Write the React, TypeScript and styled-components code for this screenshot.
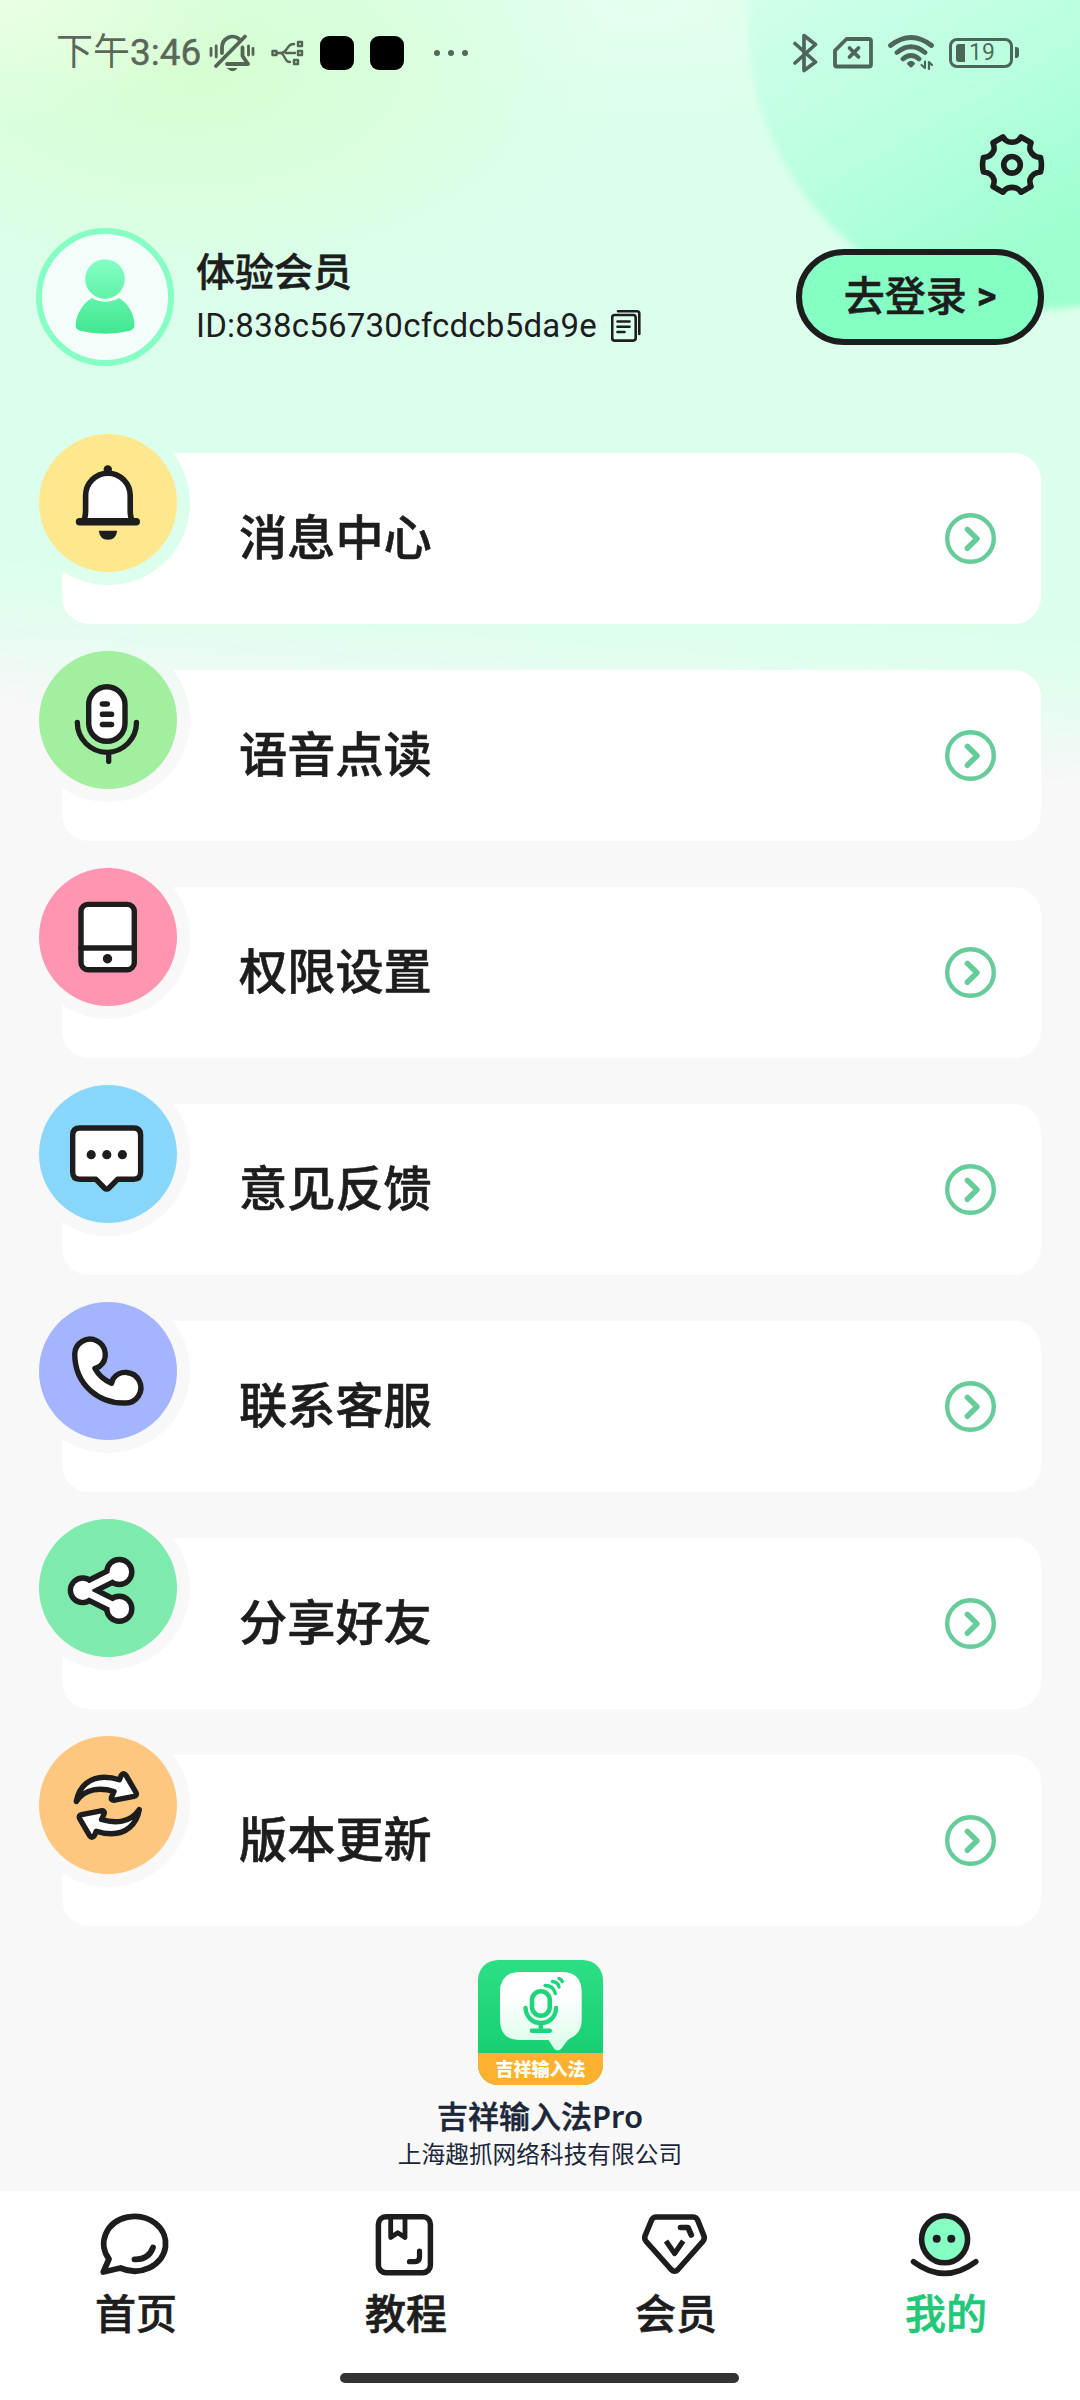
import React from 'react';
import styled, { createGlobalStyle } from 'styled-components';

const INK = '#1d1d1d';
const MINT = '#85ffc4';
const STATUS = 'rgba(0, 0, 0, 0.6)';

const GlobalStyle = createGlobalStyle`
  * { box-sizing: border-box; }
  body {
    margin: 0;
    background: #f8f8f8;
    font-family: Roboto, "Noto Sans CJK SC", sans-serif;
    color: ${INK};
  }
  svg { display: block; flex: none; }
`;

const Page = styled.div`
  position: relative;
  width: 1080px;
  height: 2400px;
  overflow: hidden;
  display: flex;
  flex-direction: column;
  background: #f8f8f8;
`;

const Backdrop = styled.div`
  position: absolute;
  inset: 0 0 auto 0;
  height: 860px;
  overflow: hidden;
  background:
    radial-gradient(ellipse 260px 130px at 0px 0px, rgba(236, 255, 228, 0.9), rgba(236, 255, 226, 0) 100%),
    radial-gradient(ellipse 420px 230px at 190px 70px, rgba(213, 254, 207, 0.95), rgba(214, 255, 212, 0.6) 50%, rgba(219, 255, 236, 0) 100%),
    radial-gradient(ellipse 300px 130px at 640px 0px, rgba(232, 255, 240, 0.8), rgba(232, 255, 240, 0) 100%),
    #dbffec;
  mask-image: linear-gradient(184.3deg, #000 630px, rgba(0, 0, 0, 0.85) 675px, rgba(0, 0, 0, 0.5) 722px, transparent 785px);
`;

const Blob = styled.div`
  position: absolute;
  left: 748px;
  top: -262px;
  width: 572px;
  height: 572px;
  border-radius: 50%;
  background: linear-gradient(150deg, #d0ffea 30%, #bdffe1 50%, #a8ffd6 66%, #9effce 76%);
  filter: blur(3px);
`;

const StatusBar = styled.div`
  position: relative;
  height: 104px;
  padding: 0 61px 0 56px;
  display: flex;
  justify-content: space-between;
  color: ${STATUS};
`;

const StatusGroup = styled.div`
  display: flex;
  align-items: center;
  height: 105px;
`;

const Clock = styled.span`
  width: 153px;
  padding-top: 1px;
  font-size: 37px;
  line-height: 44px;
  white-space: nowrap;
`;

const ClockTime = styled.span`
  -webkit-text-stroke: 0.5px #586858;
`;

const AppSquare = styled.i`
  width: 34px;
  height: 34px;
  margin-left: 16px;
  border-radius: 9px;
  background: #000;
`;

const Dots = styled.span`
  display: flex;
  gap: 8px;
  margin-left: 30px;
`;

const Dot = styled.i`
  width: 6px;
  height: 6px;
  border-radius: 50%;
  background: ${STATUS};
`;

const Battery = styled.span`
  display: flex;
  align-items: center;
  width: 64px;
  height: 30px;
  margin-left: 14px;
  padding-left: 4px;
  border: 3px solid rgba(0, 0, 0, 0.6);
  border-radius: 8px;
  font-size: 23px;
  line-height: 24px;
`;

const BatteryLevel = styled.i`
  width: 9px;
  height: 18px;
  margin-right: 4px;
  border-radius: 3px 0 0 3px;
  background: ${STATUS};
`;

const BatteryNub = styled.i`
  width: 4px;
  height: 11px;
  margin-left: 2px;
  border-radius: 0 3px 3px 0;
  background: ${STATUS};
`;

const Toolbar = styled.div`
  position: relative;
  display: flex;
  justify-content: flex-end;
  height: 124px;
  padding: 28px 34px 0 0;
`;

const Profile = styled.section`
  position: relative;
  display: flex;
  align-items: center;
  height: 138px;
  padding: 0 36px;
`;

const Avatar = styled.div`
  width: 138px;
  height: 138px;
  border: 6px solid ${MINT};
  border-radius: 50%;
  background: #f3fefa;
`;

const Identity = styled.div`
  flex: 1;
  padding: 6px 0 0 22px;
`;

const MemberName = styled.div`
  font-size: 39px;
  line-height: 52px;
  font-weight: 500;
  -webkit-text-stroke: 0.5px currentColor;
`;

const MemberId = styled.div`
  display: flex;
  align-items: center;
  gap: 14px;
  font-size: 33px;
  line-height: 54px;
  letter-spacing: 0.24px;
`;

const LoginButton = styled.button`
  width: 248px;
  height: 96px;
  padding: 0 0 8px;
  border: 6px solid ${INK};
  border-radius: 48px;
  background: ${MINT};
  color: ${INK};
  font: 500 41px/56px "Noto Sans CJK SC", sans-serif;
  -webkit-text-stroke: 0.5px currentColor;
`;

const LoginArrow = styled.span`
  margin-left: 10px;
  vertical-align: 2px;
  font: 600 38px/40px Roboto, sans-serif;
`;

const Menu = styled.nav`
  position: relative;
  display: flex;
  flex-direction: column;
  gap: 27px;
  margin-top: 68px;
`;

const MenuRow = styled.div`
  position: relative;
  height: 190px;
  padding: 19px 39px 0 62px;
`;

const Card = styled.div`
  display: flex;
  align-items: center;
  justify-content: space-between;
  height: 171px;
  padding: 0 45px 0 177px;
  border-radius: 27px;
  background: radial-gradient(circle at 46px 50px, transparent 81.5px, #fff 82.5px);
  font-size: 48.2px;
  line-height: 64px;
  font-weight: 500;
  -webkit-text-stroke: 0.6px currentColor;
`;

const RowBadge = styled.div<{ $tint: string }>`
  position: absolute;
  left: 39px;
  top: 0;
  width: 138px;
  height: 138px;
  border-radius: 50%;
  background: ${(p) => p.$tint};
`;

const About = styled.footer`
  position: relative;
  display: flex;
  flex-direction: column;
  align-items: center;
  margin-top: 34px;
  height: 231px;
  color: #1b2638;
`;

const AppLogo = styled.div`
  width: 125px;
  height: 125px;
  border-radius: 20px;
  overflow: hidden;
  background: linear-gradient(#2ddf84, #17cf72 93px);
`;

const LogoLabel = styled.div`
  height: 32px;
  padding-left: 1px;
  background: #ffb02e;
  color: #fff;
  text-align: center;
  font-size: 18px;
  line-height: 33px;
  font-weight: 900;
`;

const AppName = styled.div`
  margin-top: 10px;
  font-family: "Noto Sans", "Noto Sans CJK SC", sans-serif;
  font-size: 31px;
  line-height: 42px;
  font-weight: 500;
  -webkit-text-stroke: 0.5px currentColor;
`;

const AppEdition = styled.span`
  font-weight: 600;
  -webkit-text-stroke: 0;
`;

const Company = styled.div`
  margin-top: 2px;
  font-size: 23.7px;
  line-height: 32px;
`;

const TabBar = styled.nav`
  position: relative;
  display: grid;
  grid-template-columns: repeat(4, 1fr);
  height: 209px;
  background: #fff;
`;

const Tab = styled.div<{ $active?: boolean }>`
  display: flex;
  flex-direction: column;
  align-items: center;
  padding-top: 17px;
  font-size: 41px;
  line-height: 56px;
  font-weight: 500;
  color: ${(p) => (p.$active ? '#22c878' : INK)};
  -webkit-text-stroke: 0.6px currentColor;
`;

const TabLabel = styled.span`
  margin-top: 5px;
  padding-left: 2px;
`;

const HomeIndicator = styled.i`
  position: absolute;
  left: 340px;
  bottom: 17px;
  width: 399px;
  height: 10px;
  border-radius: 5px;
  background: #333;
`;

const line = {
  fill: 'none',
  stroke: INK,
  strokeLinecap: 'round' as const,
  strokeLinejoin: 'round' as const,
};

const statusLine = {
  fill: 'none',
  stroke: '#000',
  opacity: 0.6,
  strokeLinecap: 'round' as const,
  strokeLinejoin: 'round' as const,
};

const UsbSlot = styled.span`
  margin-left: 16px;
`;

const SignalSlot = styled.span`
  margin-left: 14px;
`;

const MutedBell = () => (
  <svg width="46" height="40" viewBox="209 33 46 40" {...statusLine} strokeWidth="3.800">
    <path d="M222 53V48.500A10.500 11.500 0 0 1 240 40M245 36.500 216 66M242.500 47.500V56L248 64H227" />
    <path d="M211 48.500v7M216.200 46v11M248.500 46v9M253 48.500v6" strokeWidth="2.800" />
    <path d="M228 68.500h9Q232.500 73 228 68.500Z" fill="#000" strokeWidth="1" />
  </svg>
);

const UsbIcon = () => (
  <svg width="33" height="26" viewBox="271 39 33 26" {...statusLine} strokeWidth="2.400">
    <path d="M272.500 50h4v4h-4ZM298 41h4v4h-4ZM298 50h4v4h-4ZM294 59h4v4h-4Z" />
    <path d="M277 52h4Q284 52 286 49L289 45Q290.500 43 294 43M286 52h9M281 52Q283 53 285 57L286.500 59.500Q287.500 61 290 61" />
  </svg>
);

const BluetoothIcon = () => (
  <svg width="28" height="42" viewBox="791 31 28 42" {...statusLine} strokeWidth="3.700">
    <path d="M795 42.500 815.500 61 804 69.500V34.500L815.500 43.500 795 62" />
  </svg>
);

const SimIcon = () => (
  <svg width="40" height="34" viewBox="833 37 40 34" {...statusLine} strokeWidth="3.800">
    <path d="M846.500 40H869Q871 40 871 42V65.500Q871 67.500 869 67.500H837Q835 67.500 835 65.500V51.500Z" />
    <path d="M849.500 49l9 9M858.500 49l-9 9" />
  </svg>
);

const WifiIcon = () => (
  <svg width="48" height="38" viewBox="887 35 48 38" {...statusLine} strokeWidth="4.800">
    <path d="M890.500 46.500Q911 30.500 931.500 46.500M897 53.500Q911 42 925 53.500M903 60Q911 53 919 60" />
    <path d="M908.500 64.500Q911 62 913.500 64.500L911 67Z" strokeWidth="3" fill="#000" />
    <path d="M925 62.500V69L921.500 66M929 70V63L932 66" strokeWidth="2.200" />
  </svg>
);

const GearIcon = () => (
  <svg width="68" height="66" viewBox="978 132 68 66" {...line} strokeWidth="5.600">
    <path d="M1003 137Q1005 140.500 1008 141.600Q1012 142.800 1016 141.600Q1019 140.500 1021 137L1031 142.700Q1029.500 146.500 1030 150Q1032.500 157 1040.500 157.500Q1042.400 165 1040.500 172Q1032.500 172.500 1030 179.500Q1029.500 183 1031 186.500L1021 192.200Q1019 189 1016 188Q1012 186.800 1008 188Q1005 189 1003 192.200L993 186.500Q994.500 183 994 179.500Q991.500 172.500 983.500 172Q981.600 165 983.500 157.500Q991.500 157 994 150Q994.500 146.500 993 142.700Z" />
    <circle cx="1012" cy="164.800" r="8.300" />
  </svg>
);

const PersonIcon = () => (
  <svg width="126" height="126" viewBox="42 234 126 126">
    <defs>
      <linearGradient id="person" gradientUnits="userSpaceOnUse" x1="0" y1="259" x2="0" y2="334">
        <stop offset="0" stopColor="#85ffc4" />
        <stop offset="1" stopColor="#3fe790" />
      </linearGradient>
    </defs>
    <circle cx="105" cy="279" r="19.800" fill="url(#person)" />
    <path d="M92 298Q105 305.500 119 298C128 303 134.500 314 134.500 326Q134 329.500 129 331Q105 336.500 81 331Q76 329.500 75.500 326C76 314 83 303 92 298Z" fill="url(#person)" />
  </svg>
);

const CopyIcon = () => (
  <svg width="30" height="32" viewBox="611 310 30 32" {...line} strokeWidth="2.600">
    <rect x="612.200" y="315" width="23.500" height="25.600" rx="2.500" />
    <path d="M618 311.300H637Q639.300 311.300 639.300 313.500V334M617.500 321.500h12M617.500 326.700h12M617.500 332h7" />
  </svg>
);

const ChevronIcon = () => (
  <svg width="51" height="51" viewBox="0 0 51 51" fill="none" stroke="#66cc99" strokeLinecap="round" strokeLinejoin="round">
    <circle cx="25.500" cy="25.500" r="23.300" strokeWidth="4.400" />
    <path d="M22.300 16.300 32 25.800 22.300 35.300" strokeWidth="5.400" />
  </svg>
);

const BellGlyph = () => (
  <>
    <circle cx="68.800" cy="35.500" r="4.200" fill={INK} stroke="none" />
    <path d="M44.500 87Q46.600 83 46.600 76V61.500A22.300 22.300 0 0 1 91.200 61.500V76Q91.200 83 93.300 87Z" fill="#fff" strokeWidth="5.600" />
    <path d="M40.500 87.700H97.300" strokeWidth="7.400" />
    <path d="M59.800 96.700H78.200Q77 105.700 69 105.700Q61 105.700 59.800 96.700Z" fill={INK} stroke="none" />
  </>
);

const MicGlyph = () => (
  <>
    <rect x="49.700" y="35.700" width="36.300" height="54.600" rx="18.100" fill="#fff" />
    <path d="M63.500 53h4.700M63.500 63.300h9M63.500 73.500h9" strokeWidth="5.600" />
    <path d="M38.300 71.300A29.600 30 0 0 0 97.500 71.300M69.700 101.500V110.500" strokeWidth="5.300" />
  </>
);

const DeviceGlyph = () => (
  <>
    <rect x="42" y="36.400" width="53.300" height="65.300" rx="7" fill="#fff" />
    <path d="M42 80H95" />
    <circle cx="68.500" cy="90.700" r="4.700" fill={INK} stroke="none" />
  </>
);

const CommentGlyph = () => (
  <>
    <path d="M41 43H94.500Q101.600 43 101.600 50V87.300Q101.600 94.300 94.500 94.300H78.500L70 103Q67.700 105.300 65.400 103L57 94.300H41Q33.700 94.300 33.700 87.300V50Q33.700 43 41 43Z" fill="#fff" />
    <circle cx="52.200" cy="69.700" r="4.600" fill={INK} stroke="none" />
    <circle cx="67.800" cy="69.700" r="4.600" fill={INK} stroke="none" />
    <circle cx="83.400" cy="69.700" r="4.600" fill={INK} stroke="none" />
  </>
);

const CallGlyph = () => (
  <path d="M56 66.500 60.500 64.500A15.300 15.300 0 1 0 35.700 52C36 84 61 101.500 86 101A15.300 15.300 0 1 0 74 77L72.500 81.300C66 78.500 59.500 73 56 66.500Z" fill="#fff" />
);

const ShareGlyph = () => (
  <>
    <path d="M80.300 53 43.700 71.300 80.300 89.700" strokeWidth="18" />
    <g fill={INK} stroke="none">
      <circle cx="43.700" cy="71.300" r="15" />
      <circle cx="80.300" cy="53" r="15.200" />
      <circle cx="80.300" cy="89.700" r="15.200" />
    </g>
    <path d="M80.300 53 43.700 71.300 80.300 89.700" stroke="#fff" strokeWidth="7" />
    <g fill="#fff" stroke="none">
      <circle cx="43.700" cy="71.300" r="9.600" />
      <circle cx="80.300" cy="53" r="9.800" />
      <circle cx="80.300" cy="89.700" r="9.800" />
    </g>
  </>
);

const swoosh =
  'M37.300 65.500C40 50 51 41.500 65 41.200Q73 41.200 80.300 43.800L82.200 39.500Q84.700 35.800 87.300 39.800L97 56.500Q98.300 59.500 95 60.300L75.500 64.200Q71.500 64.500 72.500 61.300L75 55.500C62 51.500 46 52 37.300 65.500Z';

const RefreshGlyph = () => (
  <g fill="#fff" strokeWidth="5.400">
    <path d={swoosh} />
    <path d={swoosh} transform="rotate(180 68.800 69.500)" />
  </g>
);

const menuItems = [
  { label: '消息中心', tint: '#ffe78d', Glyph: BellGlyph },
  { label: '语音点读', tint: '#a2f09f', Glyph: MicGlyph },
  { label: '权限设置', tint: '#ff95b1', Glyph: DeviceGlyph },
  { label: '意见反馈', tint: '#88d7fa', Glyph: CommentGlyph },
  { label: '联系客服', tint: '#a4b4ff', Glyph: CallGlyph },
  { label: '分享好友', tint: '#7eebad', Glyph: ShareGlyph },
  { label: '版本更新', tint: '#fdc77f', Glyph: RefreshGlyph },
];

const LogoArt = () => (
  <svg width="125" height="93" viewBox="0 0 125 93" fill="none" stroke="#1fd47a" strokeLinecap="round">
    <defs>
      <linearGradient id="bubble" x1="0" y1="0" x2="0" y2="1">
        <stop offset="0.300" stopColor="#fff" />
        <stop offset="1" stopColor="#d9fde9" />
      </linearGradient>
    </defs>
    <path d="M42 12H83.500Q103.700 12 103.700 32V60Q103.700 73 92 78.500Q89 80 87.500 83L83.500 88.500Q79.500 92.500 76 88.500L70.500 80H42Q22 80 22 60V32Q22 12 42 12Z" fill="url(#bubble)" stroke="none" />
    <rect x="54" y="31.200" width="17.800" height="24.500" rx="8.900" strokeWidth="4.600" />
    <path d="M47.600 48C48.500 68 77.200 68 78.100 48M62.800 63V70.500M53.800 70.700H71.800" strokeWidth="4.400" />
    <path d="M67 25.500Q75.500 25.500 77.300 33.500M74.500 21.500Q80 22 81 27M81 18.500Q83.500 19.500 84.300 21.500" strokeWidth="3.400" />
  </svg>
);

const ChatTabIcon = () => (
  <svg width="80" height="74" viewBox="0 0 80 74" {...line} strokeWidth="5.800">
    <path d="M14 51A31 27.300 0 1 1 25.500 60L8.300 64Z" />
    <path d="M39.500 51.300Q53.500 52 58 39.500" />
  </svg>
);

const BookTabIcon = () => (
  <svg width="80" height="74" viewBox="0 0 80 74" {...line} strokeWidth="5.500">
    <rect x="13.400" y="8.700" width="52" height="56" rx="7.500" />
    <path d="M25.700 10V29.500L32.800 24.800 40 29.500V10" strokeWidth="4.800" />
    <path d="M44.500 53.700H50Q54.500 53.700 54.500 49V43" strokeWidth="5.200" />
  </svg>
);

const DiamondTabIcon = () => (
  <svg width="80" height="74" viewBox="0 0 80 74" {...line} strokeWidth="5.600">
    <path d="M21.500 9H57.500Q61.300 9 62.600 12L69 28Q70 31 67.800 33.500L43 61.500Q39.600 65 36.200 61.500L11.200 33.500Q9 31 10 28L16.600 12Q17.900 9 21.500 9Z" />
    <path d="M45.500 19.500H53L56.300 27" />
    <path d="M31 33 39.600 45.500 48.200 33" strokeWidth="5.200" strokeLinecap="butt" strokeLinejoin="round" />
  </svg>
);

const MeTabIcon = () => (
  <svg width="80" height="74" viewBox="0 0 80 74" {...line} strokeWidth="5.600">
    <ellipse cx="39.600" cy="31.300" rx="23" ry="23.500" fill={MINT} />
    <circle cx="31.700" cy="30.700" r="4" fill={INK} stroke="none" />
    <circle cx="46.300" cy="30.700" r="4" fill={INK} stroke="none" />
    <path d="M8.500 53.700Q39.600 77 70.800 53.700" />
  </svg>
);

const tabs = [
  { label: '首页', Icon: ChatTabIcon },
  { label: '教程', Icon: BookTabIcon },
  { label: '会员', Icon: DiamondTabIcon },
  { label: '我的', Icon: MeTabIcon, active: true },
];

export default function App() {
  return (
    <>
      <GlobalStyle />
      <Page>
        <Backdrop>
          <Blob />
        </Backdrop>

        <StatusBar>
          <StatusGroup>
            <Clock>
              下午<ClockTime>3:46</ClockTime>
            </Clock>
            <MutedBell />
            <UsbSlot>
              <UsbIcon />
            </UsbSlot>
            <AppSquare />
            <AppSquare />
            <Dots>
              <Dot />
              <Dot />
              <Dot />
            </Dots>
          </StatusGroup>
          <StatusGroup>
            <BluetoothIcon />
            <SignalSlot>
              <SimIcon />
            </SignalSlot>
            <SignalSlot>
              <WifiIcon />
            </SignalSlot>
            <Battery>
              <BatteryLevel />
              19
            </Battery>
            <BatteryNub />
          </StatusGroup>
        </StatusBar>

        <Toolbar>
          <GearIcon />
        </Toolbar>

        <Profile>
          <Avatar>
            <PersonIcon />
          </Avatar>
          <Identity>
            <MemberName>体验会员</MemberName>
            <MemberId>
              ID:838c56730cfcdcb5da9e
              <CopyIcon />
            </MemberId>
          </Identity>
          <LoginButton>
            去登录<LoginArrow>&gt;</LoginArrow>
          </LoginButton>
        </Profile>

        <Menu>
          {menuItems.map(({ label, tint, Glyph }) => (
            <MenuRow key={label}>
              <Card>
                {label}
                <ChevronIcon />
              </Card>
              <RowBadge $tint={tint}>
                <svg width="138" height="138" viewBox="0 0 138 138" {...line} strokeWidth="5.400">
                  <Glyph />
                </svg>
              </RowBadge>
            </MenuRow>
          ))}
        </Menu>

        <About>
          <AppLogo>
            <LogoArt />
            <LogoLabel>吉祥输入法</LogoLabel>
          </AppLogo>
          <AppName>
            吉祥输入法<AppEdition>Pro</AppEdition>
          </AppName>
          <Company>上海趣抓网络科技有限公司</Company>
        </About>

        <TabBar>
          {tabs.map(({ label, Icon, active }) => (
            <Tab key={label} $active={active}>
              <Icon />
              <TabLabel>{label}</TabLabel>
            </Tab>
          ))}
          <HomeIndicator />
        </TabBar>
      </Page>
    </>
  );
}
